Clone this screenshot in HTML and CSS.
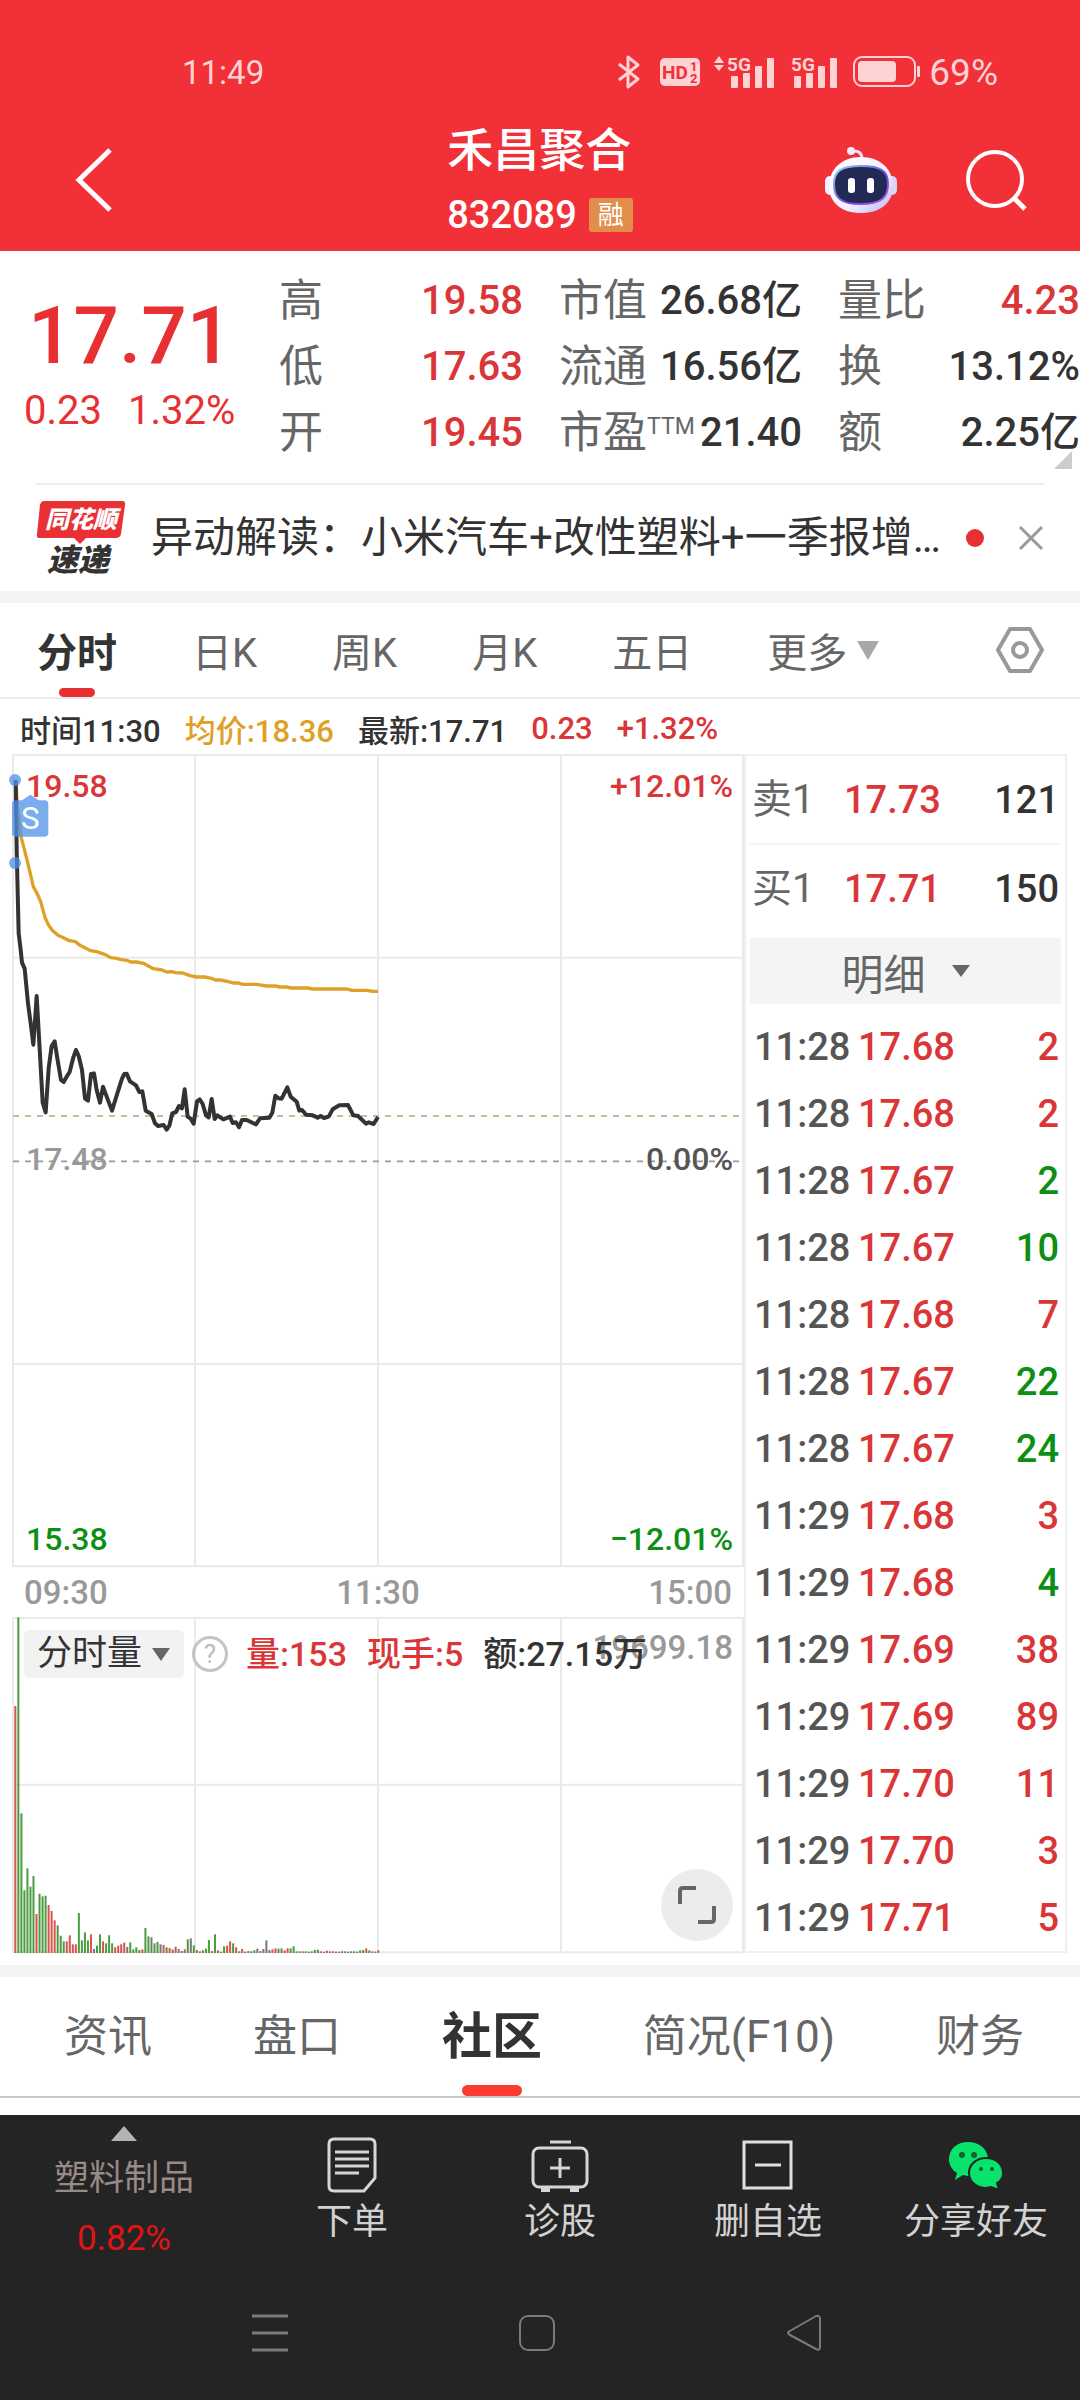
FILE: index.html
```
<!DOCTYPE html>
<html lang="zh-CN">
<head>
<meta charset="utf-8">
<meta name="viewport" content="width=device-width, initial-scale=1">
<title>禾昌聚合 832089</title>
<link rel="stylesheet" href="styles.css">
</head>
<body>
<header class="top">
  <div class="status">
    <span class="clock">11:49</span>
    <svg class="st-bt" width="22" height="34" viewBox="0 0 22 34" fill="none" stroke="currentColor" stroke-width="3" stroke-linejoin="round"><path d="M1 9L20 24L10 32V2L20 10L1 25"/></svg>
    <svg class="st-hd" width="40" height="28" viewBox="0 0 40 28"><rect width="40" height="28" rx="5" fill="currentColor"/><text class="hd-main" x="2" y="21">HD</text><text class="hd-sub" x="30" y="13">1</text><text class="hd-sub" x="30" y="25">2</text></svg>
    <svg class="st-sig1" width="60" height="34" viewBox="0 0 60 34" fill="currentColor"><path d="M0 8L5 1L10 8ZM0 10H10L5 16Z"/><text class="sig-text" x="13" y="16">5G</text><rect x="17" y="21" width="7" height="12" rx="1"/><rect x="29" y="18" width="7" height="15" rx="1"/><rect x="41" y="11" width="7" height="22" rx="1"/><rect x="53" y="3" width="7" height="30" rx="1"/></svg>
    <svg class="st-sig2" width="46" height="34" viewBox="0 0 46 34" fill="currentColor"><text class="sig-text" x="0" y="16">5G</text><rect x="3" y="21" width="7" height="12" rx="1"/><rect x="15" y="18" width="7" height="15" rx="1"/><rect x="27" y="11" width="7" height="22" rx="1"/><rect x="39" y="3" width="7" height="30" rx="1"/></svg>
    <svg class="st-bat" width="68" height="32" viewBox="0 0 68 32"><rect x="1" y="1" width="61" height="29" rx="8" fill="none" stroke="currentColor" stroke-width="2"/><rect x="5" y="5" width="38" height="21" rx="4" fill="currentColor"/><rect x="64" y="10" width="3" height="11" rx="1" fill="currentColor"/></svg>
    <span class="percent">69%</span>
  </div>
  <div class="titlebar">
    <button class="icon-btn back" type="button" aria-label="返回"><svg width="38" height="64" viewBox="0 0 38 64" fill="none" stroke="#fff" stroke-width="5"><path d="M34 2L3 32L34 62"/></svg></button>
    <div class="title">
      <h1>禾昌聚合</h1>
      <p><span>832089</span><span class="badge">融</span></p>
    </div>
    <div class="actions">
      <button class="icon-btn" type="button" aria-label="智能助手">
        <svg width="72" height="68" viewBox="0 0 72 68">
          <defs><linearGradient id="shell" x1="0" y1="0" x2="1" y2="1"><stop offset="0" stop-color="#fff"/><stop offset=".6" stop-color="#f3efff"/><stop offset="1" stop-color="#b9b4ee"/></linearGradient><linearGradient id="rim" x1="0" y1="0" x2="1" y2="1"><stop offset="0" stop-color="#8fd8e8"/><stop offset=".6" stop-color="#7440e0"/><stop offset="1" stop-color="#b060e8"/></linearGradient></defs>
          <path d="M27 5Q37 4 37 13" fill="none" stroke="#f2e3fa" stroke-width="3"/><circle cx="26" cy="5" r="4" fill="#f6e9fb"/>
          <rect x="0" y="30" width="10" height="19" rx="5" fill="#f1efff"/><rect x="62" y="30" width="10" height="19" rx="5" fill="#d8d3f8"/>
          <path d="M36 11C56 11 68 24 68 40C68 57 55 67 36 67C17 67 4 57 4 40C4 24 16 11 36 11Z" fill="url(#shell)"/>
          <path d="M36 20C56 20 63 25 63 38C63 52 56 58 36 58C16 58 9 52 9 38C9 25 16 20 36 20Z" fill="#202a52" stroke="url(#rim)" stroke-width="2"/>
          <rect x="23" y="32" width="7" height="15" rx="3" fill="#fff"/><rect x="42" y="32" width="7" height="15" rx="3" fill="#fff"/>
        </svg>
      </button>
      <button class="icon-btn" type="button" aria-label="搜索"><svg width="62" height="62" viewBox="0 0 62 62" fill="none" stroke="#fff" stroke-width="4"><circle cx="29" cy="30" r="27"/><path d="M48 49L59 60" stroke-width="5"/></svg></button>
    </div>
  </div>
</header>

<main>
  <section class="quote">
    <div class="price">
      <strong>17.71</strong>
      <p><span>0.23</span><span>1.32%</span></p>
    </div>
    <dl>
      <div><dt>高</dt><dd class="up">19.58</dd></div>
      <div><dt>低</dt><dd class="up">17.63</dd></div>
      <div><dt>开</dt><dd class="up">19.45</dd></div>
    </dl>
    <dl>
      <div><dt>市值</dt><dd>26.68亿</dd></div>
      <div><dt>流通</dt><dd>16.56亿</dd></div>
      <div><dt>市盈<span class="ttm">TTM</span></dt><dd>21.40</dd></div>
    </dl>
    <dl>
      <div><dt>量比</dt><dd class="up">4.23</dd></div>
      <div><dt>换</dt><dd>13.12%</dd></div>
      <div><dt>额</dt><dd>2.25亿</dd></div>
    </dl>
    <span class="corner"></span>
  </section>

  <section class="news">
    <svg class="news-logo" width="90" height="80" viewBox="0 0 90 80"><path d="M8 3H86Q90 3 89 7L85 36Q84 40 80 40H50L44 46L38 40H4Q0 40 1 36L4 7Q5 3 8 3Z" fill="#e83035"/><text class="logo-top" x="9" y="30">同花顺</text><text class="logo-bottom" x="11" y="73">速递</text></svg>
    <a href="#news">异动解读：小米汽车+改性塑料+一季报增…</a>
    <span class="dot"></span>
    <button class="icon-btn" type="button" aria-label="关闭"><svg width="26" height="26" viewBox="0 0 26 26" fill="none" stroke="#999" stroke-width="3"><path d="M2 2L24 24M24 2L2 24"/></svg></button>
  </section>

  <nav class="periods">
    <button class="active" type="button">分时</button>
    <button type="button">日K</button>
    <button type="button">周K</button>
    <button type="button">月K</button>
    <button type="button">五日</button>
    <button class="more" type="button">更多<svg width="22" height="19" viewBox="0 0 22 19" fill="#a8a8a8"><path d="M0 0H22L11 19Z"/></svg></button>
    <button class="settings" type="button" aria-label="设置"><svg width="48" height="48" viewBox="0 0 48 48" fill="none" stroke="#999" stroke-width="4" stroke-linejoin="round"><path d="M14 3H34L46 24L34 45H14L2 24Z"/><circle cx="24" cy="24" r="7"/></svg></button>
  </nav>

  <div class="legend"><span>时间11:30</span><span class="avg">均价:18.36</span><span>最新:17.71</span><span class="up">0.23</span><span class="up">+1.32%</span></div>

  <section class="market">
    <div class="charts">
      <div class="plot">
        <svg class="chart" viewBox="39 42 2193 2439">
          <path class="grid" d="M39 45H2229V2479H39ZM585 45V2479M1134 45V2479M1683 45V2479M39 653H2229M39 1872H2229"/>
          <path class="dash tan" d="M39 1128H2229"/>
          <path class="dash grey" d="M39 1264H2229"/>
          <path class="avg-line" d="M48 125L52 200L63 290L80 355L100 440L112 462L122 485L136 535L146 556L158 572L174 586L192 594L208 602L226 605L240 616L272 632L290 635L316 644L332 653L350 655L364 659L380 661L392 666L410 666L430 670L460 686L486 690L500 696L516 695L526 698L548 699L570 707L590 711L614 711L634 715L646 720L662 720L682 724L700 729L716 729L728 733L770 733L800 738L826 738L840 741L860 741L874 744L924 744L938 747L1040 747L1056 751L1100 751L1118 754L1134 754"/>
          <path class="price-line" d="M47 120L50 330L56 580L61 620L66 668L74 686L84 790L92 850L100 914L110 768L122 980L128 1088L137 1117L146 985L155 918L164 904L172 955L183 1020L191 1026L200 1010L209 996L220 952L228 930L236 948L246 990L255 1076L264 1082L273 1002L282 1000L290 1050L300 1088L309 1040L322 1075L336 1112L352 1060L366 1016L373 1002L380 1001L390 1024L408 1036L418 1056L427 1054L437 1112L455 1122L465 1150L474 1158L491 1155L500 1169L508 1157L517 1120L528 1116L537 1098L546 1105L554 1048L563 1130L572 1136L581 1151L591 1084L599 1078L608 1092L618 1126L626 1132L635 1077L644 1137L652 1126L670 1138L690 1130L698 1149L708 1147L717 1162L726 1140L740 1140L768 1153L780 1135L808 1133L817 1118L826 1067L835 1075L845 1076L862 1042L872 1070L890 1085L898 1112L906 1110L918 1124L938 1126L953 1133L962 1128L972 1134L986 1130L998 1108L1018 1096L1044 1095L1060 1126L1074 1128L1098 1151L1106 1147L1121 1152L1134 1131"/>
          <g class="marker"><circle cx="45" cy="120" r="18"/><circle cx="45" cy="369" r="18"/><path d="M66 181L91 164L116 181H134Q145 181 145 192V280Q145 290 134 290H47Q36 290 36 280V192Q36 181 47 181Z"/></g>
          <text class="marker-text" x="91" y="268">S</text>
        </svg>
        <span class="axis tl up">19.58</span>
        <span class="axis tr up">+12.01%</span>
        <span class="axis ml">17.48</span>
        <span class="axis mr">0.00%</span>
        <span class="axis bl down">15.38</span>
        <span class="axis br down">−12.01%</span>
      </div>
      <div class="times"><span>09:30</span><span>11:30</span><span>15:00</span></div>
      <div class="plot">
        <svg class="chart" viewBox="39 0 2193 1008">
          <path class="grid" d="M39 3H2229V1006H39ZM585 3V1006M1134 3V1006M1683 3V1006M39 503H2229"/>
          <g id="bars"></g>
        </svg>
        <span class="vol-max">19699.18</span>
        <div class="vol-head">
          <button class="vol-select" type="button">分时量<svg width="18" height="13" viewBox="0 0 18 13" fill="#666"><path d="M0 0H18L9 13Z"/></svg></button>
          <button class="icon-btn help" type="button" aria-label="说明">?</button>
          <span class="up">量:153</span><span class="up">现手:5</span><span>额:27.15万</span>
        </div>
        <button class="expand" type="button" aria-label="全屏"><svg width="38" height="38" viewBox="0 0 38 38" fill="none" stroke="#666" stroke-width="4"><path d="M2 18V5Q2 2 5 2H18M36 20V33Q36 36 33 36H20"/></svg></button>
      </div>
    </div>

    <aside class="book">
      <table class="levels">
        <tr><th scope="row">卖1</th><td class="up">17.73</td><td>121</td></tr>
        <tr><th scope="row">买1</th><td class="up">17.71</td><td>150</td></tr>
      </table>
      <button class="detail" type="button">明细<svg width="18" height="12" viewBox="0 0 18 12" fill="#666"><path d="M0 0H18L9 12Z"/></svg></button>
      <table class="trades">
        <tr><td>11:28</td><td>17.68</td><td class="up">2</td></tr>
        <tr><td>11:28</td><td>17.68</td><td class="up">2</td></tr>
        <tr><td>11:28</td><td>17.67</td><td class="down">2</td></tr>
        <tr><td>11:28</td><td>17.67</td><td class="down">10</td></tr>
        <tr><td>11:28</td><td>17.68</td><td class="up">7</td></tr>
        <tr><td>11:28</td><td>17.67</td><td class="down">22</td></tr>
        <tr><td>11:28</td><td>17.67</td><td class="down">24</td></tr>
        <tr><td>11:29</td><td>17.68</td><td class="up">3</td></tr>
        <tr><td>11:29</td><td>17.68</td><td class="down">4</td></tr>
        <tr><td>11:29</td><td>17.69</td><td class="up">38</td></tr>
        <tr><td>11:29</td><td>17.69</td><td class="up">89</td></tr>
        <tr><td>11:29</td><td>17.70</td><td class="up">11</td></tr>
        <tr><td>11:29</td><td>17.70</td><td class="up">3</td></tr>
        <tr><td>11:29</td><td>17.71</td><td class="up">5</td></tr>
      </table>
    </aside>
  </section>

  <nav class="sections">
    <a href="#info">资讯</a>
    <a href="#board">盘口</a>
    <a class="active" href="#community">社区</a>
    <a href="#f10">简况(F10)</a>
    <a href="#finance">财务</a>
  </nav>
</main>

<footer class="bottom">
  <div class="tools">
    <button class="sector" type="button"><svg width="26" height="15" viewBox="0 0 26 15" fill="#b4b4b4"><path d="M0 15L13 0L26 15Z"/></svg><span class="name">塑料制品</span><span class="pct">0.82%</span></button>
    <button type="button"><svg width="56" height="56" viewBox="0 0 56 56" fill="none" stroke="#d6d6d6" stroke-width="3"><path d="M10 2H46Q51 2 51 7V41L40 54H10Q5 54 5 49V7Q5 2 10 2Z"/><path d="M11 15H45M11 22H45M11 29H45M11 36H35"/></svg><span>下单</span></button>
    <button type="button"><svg width="58" height="56" viewBox="0 0 58 56" fill="none" stroke="#d6d6d6" stroke-width="3"><path d="M19 5H40"/><rect x="2" y="11" width="54" height="39" rx="6"/><path d="M29 21V41M19 31H39"/><path d="M10 53H19M39 53H48" stroke-width="4"/></svg><span>诊股</span></button>
    <button type="button"><svg width="56" height="56" viewBox="0 0 56 56" fill="none" stroke="#e0e0e0" stroke-width="3"><rect x="4" y="5" width="47" height="46"/><path d="M15 28H41"/></svg><span>删自选</span></button>
    <button type="button"><svg width="56" height="56" viewBox="0 0 56 56"><path d="M20 5C31 5 40 12 40 22C40 32 31 39 20 39L15 38L7 43L9 36C4 33 1 28 1 22C1 12 9 5 20 5Z" fill="#09e36b"/><path d="M38 21C48 21 55 27 55 36C55 40 53 44 49 46L51 53L43 50L38 51C29 51 21 45 21 36C21 27 29 21 38 21Z" fill="#09e36b" stroke="#242424" stroke-width="2"/><g fill="#11602f"><circle cx="14" cy="18" r="3"/><circle cx="26" cy="18" r="3"/><circle cx="33" cy="32" r="2"/><circle cx="44" cy="32" r="2"/></g></svg><span>分享好友</span></button>
  </div>
  <div class="system">
    <button class="icon-btn" type="button" aria-label="任务"><svg width="36" height="38" viewBox="0 0 36 38" stroke="#7a7a7a" stroke-width="3"><path d="M0 2H36M0 19H36M0 36H36"/></svg></button>
    <button class="icon-btn" type="button" aria-label="主页"><svg width="36" height="38" viewBox="0 0 36 38" fill="none" stroke="#7a7a7a" stroke-width="2"><rect x="1" y="2" width="34" height="34" rx="8"/></svg></button>
    <button class="icon-btn" type="button" aria-label="后退"><svg width="36" height="38" viewBox="0 0 36 38" fill="none" stroke="#7a7a7a" stroke-width="2" stroke-linejoin="round"><path d="M4 17L30 2Q34 1 34 5V33Q34 37 30 35L4 21Q0 19 4 17Z"/></svg></button>
  </div>
</footer>
<script src="bars.js"></script>
</body>
</html>
```
FILE: styles.css
```
* { box-sizing: border-box; }
body { margin: 0; background: #fff; color: #333; font-family: Roboto, "Noto Sans CJK SC", sans-serif; }
h1, p, dl, dd { margin: 0; }
svg { display: block; flex: none; overflow: visible; }
button { border: 0; padding: 0; margin: 0; background: none; color: inherit; font: inherit; }
a { color: inherit; text-decoration: none; }
.up { color: #da3638; }
.down { color: #0c8f12; }

.top { background: #f13038; color: #fff; padding-top: 48px; }
.status { display: flex; align-items: center; height: 48px; padding: 0 82px 0 182px; color: #ffd2d4; font-size: 33px; }
.clock { margin-right: auto; }
.percent { font-size: 37px; }
.st-hd { margin-left: 20px; }
.st-sig1 { margin-left: 14px; }
.st-sig2 { margin-left: 17px; }
.st-bat { margin: 0 8px 0 16px; }
.hd-main { font-size: 19px; font-weight: 700; fill: #f13038; }
.hd-sub { font-size: 13px; font-weight: 700; fill: #f13038; }
.sig-text { font-size: 19px; font-weight: 700; }
.titlebar { display: grid; grid-template-columns: 1fr auto 1fr; align-items: center; padding: 24px 52px 11px 76px; }
.back { justify-self: start; }
.title { padding-right: 24px; }
.title h1 { font-size: 46px; line-height: 60px; font-weight: 500; }
.title p { display: flex; align-items: center; gap: 12px; margin-top: 10px; font-size: 38px; line-height: 50px; font-weight: 500; }
.badge { background: #e38d4b; border-radius: 3px; width: 44px; font-size: 26px; line-height: 34px; font-weight: 400; text-align: center; }
.actions { justify-self: end; display: flex; align-items: center; gap: 69px; }

.quote { position: relative; display: grid; grid-template-columns: 219fr 244fr 243fr 242fr; column-gap: 36px; padding: 17px 0 17px 24px; }
.price { padding-top: 29px; color: #e83033; }
.price strong { display: block; padding-left: 4px; font-size: 80px; line-height: 78px; font-weight: 500; }
.price p { display: flex; gap: 26px; margin-top: 11px; font-size: 40px; line-height: 50px; white-space: nowrap; }
.quote dl > div { display: flex; justify-content: space-between; align-items: center; height: 66px; line-height: 66px; white-space: nowrap; }
.quote dt { font-size: 44px; color: #666; }
.quote dd { font-size: 40px; font-weight: 500; }
.ttm { font-size: 23px; line-height: 23px; vertical-align: 14px; }
.corner { position: absolute; right: 8px; bottom: 14px; border: solid transparent; border-width: 18px 0 0 18px; border-top: 0; border-bottom: 18px solid #ccc; }

.news { display: flex; align-items: center; margin: 0 36px; height: 108px; border-top: 2px solid #eee; }
.news a { flex: 1; margin-left: 25px; font-size: 42px; line-height: 60px; white-space: nowrap; }
.dot { width: 18px; height: 18px; margin-right: 34px; border-radius: 50%; background: #e83033; }

.periods { display: flex; align-items: center; gap: 75px; height: 108px; padding: 0 36px 0 37px; border-top: 12px solid #f4f4f4; border-bottom: 2px solid #eaeaea; font-size: 40px; color: #666; }
.periods button { position: relative; height: 94px; }
.periods .active { color: #333; font-weight: 700; }
.periods .active::after { content: ""; position: absolute; left: 50%; bottom: 0; width: 36px; height: 9px; margin-left: -18px; border-radius: 5px; background: #e83033; }
.periods .more { display: flex; align-items: center; gap: 10px; }
.periods .settings { margin-left: auto; }

.legend { display: flex; align-items: center; gap: 24px; height: 55px; padding: 4px 20px 0; font-size: 31px; font-weight: 500; }
.legend .avg { color: #dfa026; }

.market { display: grid; grid-template-columns: 731fr 323fr; padding: 0 13px 12px; border-bottom: 12px solid #f4f4f4; }
.plot { position: relative; }
.chart { width: 100%; height: auto; }
.grid { fill: none; stroke: #eaeaea; stroke-width: 6; }
.dash { fill: none; stroke-width: 5; stroke-dasharray: 18 18; }
.tan { stroke: #b9a878; }
.grey { stroke: #999; }
.avg-line { fill: none; stroke: #dfa026; stroke-width: 10; stroke-linejoin: round; }
.price-line { fill: none; stroke: #333; stroke-width: 12; stroke-linejoin: round; }
.marker { fill: #4f92e8; fill-opacity: .75; }
.marker-text { font-size: 94px; fill: #fff; text-anchor: middle; }
.bar-r { fill: #d9534f; }
.bar-g { fill: #4a9c3f; }
.bar-k { fill: #777; }
.axis { position: absolute; font-size: 32px; line-height: 40px; font-weight: 500; }
.tl, .ml, .bl { left: 13px; }
.tr, .mr, .br { right: 11px; }
.tl, .tr { top: 12px; }
.ml, .mr { top: 50%; margin-top: -22px; }
.ml { color: #999; }
.mr { color: #555; }
.bl, .br { bottom: 8px; }
.times { display: flex; justify-content: space-between; padding: 2px 12px 0 11px; font-size: 33px; line-height: 48px; font-weight: 500; color: #999; }
.vol-max { position: absolute; top: 11px; right: 11px; font-size: 33px; line-height: 40px; font-weight: 500; color: #999; }
.vol-head { position: absolute; top: 13px; left: 11px; display: flex; align-items: center; gap: 20px; font-size: 34px; line-height: 48px; white-space: nowrap; font-weight: 500; }
.vol-select { display: flex; align-items: center; gap: 10px; padding: 0 14px 0 13px; background: #f2f2f2; border-radius: 5px; font-size: 35px; font-weight: 400; }
.help { width: 36px; height: 36px; margin: 0 -2px 0 -12px; border: 3px solid #c4c4c4; border-radius: 50%; color: #bbb; font-size: 26px; line-height: 30px; text-align: center; font-weight: 400; }
.expand { position: absolute; right: 11px; bottom: 12px; display: grid; place-items: center; width: 72px; height: 72px; border-radius: 50%; background: #ececec; }

.book { border: 2px solid #efefef; padding: 0 4px; }
.book table { width: 100%; border-collapse: collapse; line-height: 44px; }
.book td:last-child { text-align: right; padding-right: 2px; }
.book th, .book td { padding: 0; }
.levels { font-size: 40px; }
.levels tr { height: 88px; }
.levels tr + tr { height: 94px; border-top: 2px solid #f4f4f4; }
.levels th { width: 94px; padding-left: 2px; color: #666; font-weight: 400; text-align: left; }
.levels td { font-size: 38px; font-weight: 500; }
.levels tr + tr > * { padding-bottom: 6px; }
.detail { display: flex; justify-content: center; align-items: center; gap: 26px; width: 100%; height: 66px; margin-bottom: 9px; background: #f4f4f4; color: #666; font-size: 42px; }
.trades { font-size: 38px; font-weight: 500; }
.trades tr { height: 67px; }
.trades td { color: #555; }
.trades td:first-child { width: 108px; padding-left: 4px; }
.trades td:nth-child(2) { color: #da3638; }
.trades .up { color: #da3638; }
.trades .down { color: #0c8f12; }

.sections { display: flex; justify-content: space-between; height: 121px; padding: 0 56px 0 64px; border-bottom: 2px solid #c8c8c8; color: #666; font-size: 44px; line-height: 121px; margin-bottom: 17px; }
.sections .active { position: relative; color: #333; font-size: 50px; font-weight: 700; }
.sections .active::after { content: ""; position: absolute; left: 50%; bottom: 0; width: 60px; height: 11px; margin-left: -30px; border-radius: 6px; background: #fd3b31; }

.bottom { background: #242424; color: #d2d2d2; }
.tools { display: grid; grid-template-columns: 248fr 208fr 208fr 208fr 208fr; height: 151px; }
.tools button { display: flex; flex-direction: column; align-items: center; padding-top: 22px; font-size: 36px; line-height: 58px; }
.tools .sector { padding-top: 11px; font-size: 35px; }
.sector .name { color: #988a85; margin-top: 10px; line-height: 56px; }
.sector .pct { color: #e01414; line-height: 64px; }
.system { display: flex; justify-content: space-between; align-items: center; height: 134px; padding: 0 258px 0 252px; }

.logo-top { font-size: 24px; font-weight: 900; font-style: italic; fill: #fff; }
.logo-bottom { font-size: 31px; font-weight: 900; font-style: italic; fill: #333; }
```
FILE: bars.js
```
// Minute volumes: colour letter (r rise, g fall, k flat) and bar height.
var volumes = ("r741 g1007 g419 g188 g254 g199 g231 r117 g178 g170 g172 r144 r126 r98 g83 g52 g35 r35 r53 r26 r26 " +
  "g120 g38 g62 g38 r56 k12 g22 g56 r35 g29 g53 g29 r17 r22 r26 r31 k18 g32 g11 g17 g9 r11 g75 g50 k47 g29 g33 " +
  "k26 r24 g17 r15 r11 k19 r12 k6 r11 g41 k44 g23 r9 r5 g8 g13 g39 r6 g56 r8 g4 g20 r22 r35 g29 r17 g5 r12 k4 k6 " +
  "g5 g8 k13 r6 k12 k38 k9 r11 r14 g13 k14 r8 r14 g14 g20 g5 k5 r5 g5 k4 k5 g9 g10 r5 k4 r7 k5 r5 k4 r4 k5 k5 k4 " +
  "g5 k5 g4 g8 g9 r14 g8 r5 k4 r8").split(" ");
var svgNs = "http://www.w3.org/2000/svg";
var layer = document.getElementById("bars");
volumes.forEach(function (item, i) {
  var h = Number(item.slice(1));
  var bar = document.createElementNS(svgNs, "rect");
  bar.setAttribute("class", "bar-" + item[0]);
  bar.setAttribute("x", 43 + i * 1089 / 120);
  bar.setAttribute("y", 1008 - h);
  bar.setAttribute("width", 6);
  bar.setAttribute("height", h);
  layer.appendChild(bar);
});
```
